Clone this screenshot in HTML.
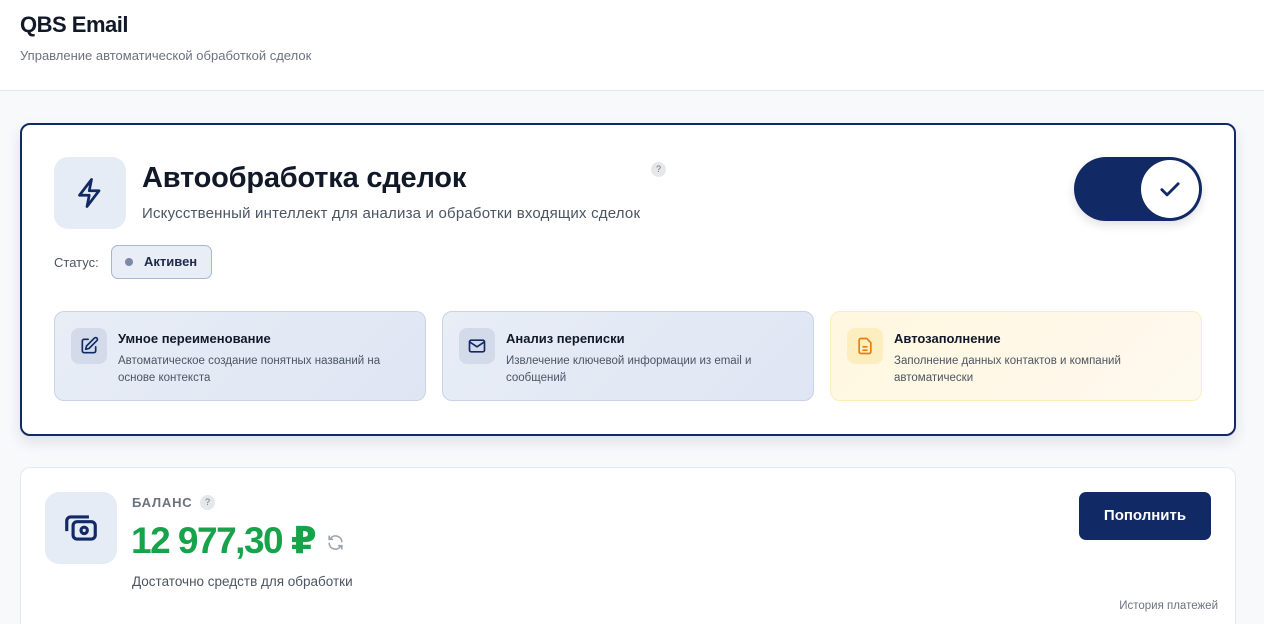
<!DOCTYPE html>
<html><head><meta charset="utf-8"><style>
*{box-sizing:border-box;margin:0;padding:0}
html,body{width:1264px;height:624px;overflow:hidden}
body{background:#f8f9fb;font-family:"Liberation Sans","DejaVu Sans",sans-serif;color:#111827;position:relative}
.hdr{position:absolute;left:0;top:0;width:1264px;height:91px;background:#fff;border-bottom:1px solid #e5e7eb}
.abs{position:absolute}
.card1{position:absolute;left:20px;top:123px;width:1216px;height:313px;background:#fff;border:2px solid #112a66;border-radius:10px;box-shadow:0 6px 14px rgba(17,42,102,.12)}
.card2{position:absolute;left:20px;top:467px;width:1216px;height:157px;background:#fff;border:1px solid #e5e7eb;border-bottom:none;border-radius:10px 10px 0 0}
.feat{position:absolute;top:311px;width:372px;height:90px;border-radius:10px;border:1px solid #c9d3e6;background:linear-gradient(135deg,#e8edf6,#dfe6f3)}
.feat .ic{position:absolute;left:16px;top:16px;width:36px;height:36px;border-radius:8px;background:#d3dbea;display:flex;align-items:center;justify-content:center}
.feat .t{position:absolute;left:63px;top:19px;font-size:13px;font-weight:bold;color:#111827}
.feat .d{position:absolute;left:63px;top:41px;width:290px;font-size:11.5px;line-height:17px;color:#4b5563}
.q{position:absolute;width:15px;height:15px;border-radius:50%;background:#e5e7eb;color:#6b7280;font-size:9px;text-align:center;line-height:15px}
</style></head><body>
<div class="hdr">
  <div class="abs" style="left:20px;top:12px;font-size:22px;font-weight:bold;color:#111827;letter-spacing:-.5px">QBS Email</div>
  <div class="abs" style="left:20px;top:48px;font-size:13px;color:#6b7280">Управление автоматической обработкой сделок</div>
</div>

<div class="card1"></div>
<div class="abs" style="left:54px;top:157px;width:72px;height:72px;border-radius:14px;background:#e6ecf6;display:flex;align-items:center;justify-content:center">
<svg width="36" height="36" viewBox="0 0 24 24" fill="none" stroke="#112a66" stroke-width="1.8" stroke-linejoin="round"><path d="M13 3 5 13.5h6.5L10 21l8-10.5h-6.5z"/></svg></div>
<div class="abs" style="left:142px;top:162px;font-size:29px;font-weight:bold;color:#111827;letter-spacing:-.2px">Автообработка сделок</div>
<div class="abs" style="left:142px;top:205px;font-size:15px;color:#4b5563;letter-spacing:.2px">Искусственный интеллект для анализа и обработки входящих сделок</div>
<div class="q" style="left:651px;top:162px">?</div>

<div class="abs" style="left:1074px;top:157px;width:128px;height:64px;border-radius:32px;background:#112a66;box-shadow:0 4px 10px rgba(0,0,0,.12)"></div>
<div class="abs" style="left:1141px;top:160px;width:58px;height:58px;border-radius:50%;background:#fff;display:flex;align-items:center;justify-content:center">
<svg width="28" height="28" viewBox="0 0 24 24" fill="none" stroke="#112a66" stroke-width="2.4" stroke-linecap="round" stroke-linejoin="round"><path d="M5 12.5l4.5 4.5L19 7.5"/></svg></div>

<div class="abs" style="left:54px;top:255px;font-size:13px;color:#4b5563">Статус:</div>
<div class="abs" style="left:111px;top:245px;width:101px;height:34px;border-radius:7px;border:1px solid #a9b6d3;background:#e8edf6"></div>
<div class="abs" style="left:125px;top:258px;width:8px;height:8px;border-radius:50%;background:#7b88a8"></div>
<div class="abs" style="left:144px;top:254px;font-size:13px;font-weight:bold;color:#1f2a4a">Активен</div>

<div class="feat" style="left:54px"><div class="ic"><svg width="20" height="20" viewBox="0 0 24 24" fill="none" stroke="#112a66" stroke-width="2" stroke-linecap="round" stroke-linejoin="round"><path d="M11 4H6a2 2 0 0 0-2 2v12a2 2 0 0 0 2 2h12a2 2 0 0 0 2-2v-5"/><path d="M18.5 2.5a2.1 2.1 0 0 1 3 3L12 15l-4 1 1-4z"/></svg></div><div class="t">Умное переименование</div><div class="d">Автоматическое создание понятных названий на основе контекста</div></div>
<div class="feat" style="left:442px"><div class="ic"><svg width="20" height="20" viewBox="0 0 24 24" fill="none" stroke="#112a66" stroke-width="2" stroke-linejoin="round"><rect x="3" y="5" width="18" height="14" rx="2"/><path d="M3 7l9 6 9-6"/></svg></div><div class="t">Анализ переписки</div><div class="d">Извлечение ключевой информации из email и сообщений</div></div>
<div class="feat" style="left:830px;border-color:#fdeebb;background:linear-gradient(135deg,#fff7df,#fff9ef)"><div class="ic" style="background:#fdeec0"><svg width="20" height="20" viewBox="0 0 24 24" fill="none" stroke="#e67e10" stroke-width="2" stroke-linejoin="round"><path d="M14 3H7a2 2 0 0 0-2 2v14a2 2 0 0 0 2 2h10a2 2 0 0 0 2-2V8z"/><path d="M9 13h6M9 17h6"/></svg></div><div class="t">Автозаполнение</div><div class="d">Заполнение данных контактов и компаний автоматически</div></div>

<div class="card2"></div>
<div class="abs" style="left:45px;top:492px;width:72px;height:72px;border-radius:14px;background:#e6ecf6;display:flex;align-items:center;justify-content:center">
<svg width="38" height="38" viewBox="0 0 24 24" fill="none" stroke="#112a66" stroke-width="2" stroke-linejoin="round"><rect x="7" y="8" width="14" height="11" rx="2.5"/><path d="M17 5H5.5A2.5 2.5 0 0 0 3 7.5V14"/><circle cx="14" cy="13.5" r="2"/></svg></div>
<div class="abs" style="left:132px;top:495px;font-size:13px;font-weight:bold;color:#6b7280;letter-spacing:.8px">БАЛАНС</div>
<div class="q" style="left:200px;top:495px">?</div>
<div class="abs" style="left:131px;top:519px;font-size:37px;font-weight:bold;color:#16a34a;letter-spacing:-1.5px">12 977,30 ₽</div>
<svg class="abs" style="left:326px;top:533px" width="19" height="19" viewBox="0 0 24 24" fill="none" stroke="#9ca3af" stroke-width="2" stroke-linecap="round"><path d="M20 11a8 8 0 0 0-14.5-4M4 4v4h4M4 13a8 8 0 0 0 14.5 4M20 20v-4h-4"/></svg>
<div class="abs" style="left:132px;top:574px;font-size:13.5px;color:#4b5563">Достаточно средств для обработки</div>
<div class="abs" style="left:1079px;top:492px;width:132px;height:48px;border-radius:7px;background:#112a66;color:#fff;font-size:15px;font-weight:bold;text-align:center;line-height:48px">Пополнить</div>
<div class="abs" style="left:1100px;top:600px;width:118px;text-align:right;font-size:11.5px;color:#6b7280">История платежей</div>
</body></html>
